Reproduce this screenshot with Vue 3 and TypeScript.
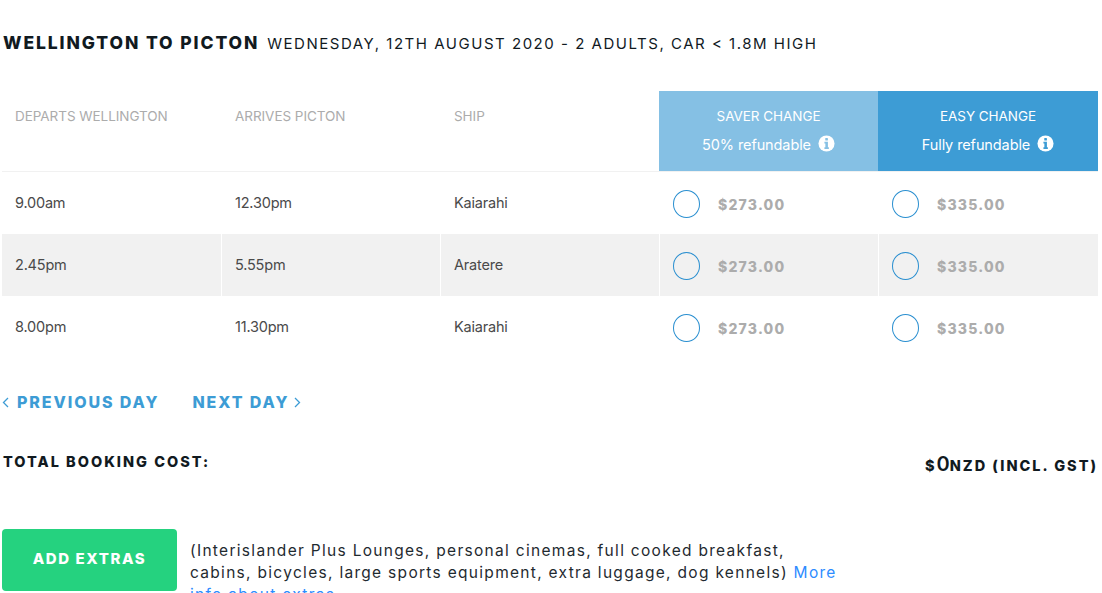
<script setup lang="ts">
interface Sailing {
  departs: string;
  arrives: string;
  ship: string;
}

const sailings: Sailing[] = [
  { departs: "9.00am", arrives: "12.30pm", ship: "Kaiarahi" },
  { departs: "2.45pm", arrives: "5.55pm", ship: "Aratere" },
  { departs: "8.00pm", arrives: "11.30pm", ship: "Kaiarahi" },
];
</script>

<template>
  <div class="page">
    <h1 class="title">
      <strong>WELLINGTON TO PICTON</strong>
      <span>WEDNESDAY, 12TH AUGUST 2020 - 2 ADULTS, CAR &lt; 1.8M HIGH</span>
    </h1>

    <div class="table">
      <div class="row head">
        <div class="cell">DEPARTS WELLINGTON</div>
        <div class="cell">ARRIVES PICTON</div>
        <div class="cell">SHIP</div>
        <div class="fare saver">
          <div>SAVER CHANGE</div>
          <div class="refund">
            50% refundable
            <svg class="info" viewBox="0 0 18 18">
              <circle cx="9" cy="9" r="8.5" fill="#fff" />
              <rect x="7.7" y="3.2" width="2.8" height="2.6" rx="0.6" fill="#85c0e4" />
              <path d="M6.8 7.2h3.7v5.7h1v1.8H6.8v-1.8h1v-3.900h-1z" fill="#85c0e4" />
            </svg>
          </div>
        </div>
        <div class="fare easy">
          <div>EASY CHANGE</div>
          <div class="refund">
            Fully refundable
            <svg class="info" viewBox="0 0 18 18">
              <circle cx="9" cy="9" r="8.5" fill="#fff" />
              <rect x="7.7" y="3.2" width="2.8" height="2.6" rx="0.6" fill="#3d9cd5" />
              <path d="M6.8 7.2h3.700v5.7h1v1.8H6.800v-1.8h1v-3.900h-1z" fill="#3d9cd5" />
            </svg>
          </div>
        </div>
      </div>

      <div v-for="s in sailings" :key="s.departs" class="row body">
        <div class="cell">{{ s.departs }}</div>
        <div class="cell">{{ s.arrives }}</div>
        <div class="cell">{{ s.ship }}</div>
        <div class="cell price">
          <span class="radio"></span>
          <span class="amount">$273.00</span>
        </div>
        <div class="cell price">
          <span class="radio"></span>
          <span class="amount">$335.00</span>
        </div>
      </div>
    </div>

    <div class="days">
      <a class="day">
        <svg class="chev" viewBox="0 0 7 11"><path d="M6 1 1.500 5.500 6 10" /></svg>
        PREVIOUS DAY
      </a>
      <a class="day next">
        NEXT DAY
        <svg class="chev" viewBox="0 0 7 11"><path d="M1 1 5.500 5.500 1 10" /></svg>
      </a>
    </div>

    <div class="total">
      <div class="total-label">TOTAL BOOKING COST:</div>
      <div class="total-value">$<span class="zero">0</span>NZD (INCL. GST)</div>
    </div>

    <div class="extras">
      <button class="add" type="button">ADD EXTRAS</button>
      <p class="extras-text">
        (Interislander Plus Lounges, personal cinemas, full cooked breakfast,
        cabins, bicycles, large sports equipment, extra luggage, dog kennels)
        <a class="more">More info about extras</a>
      </p>
    </div>
  </div>
</template>

<style>
html,
body {
  margin: 0;
  height: 593px;
  overflow: hidden;
  background: #fff;
}
</style>

<style scoped>
.page {
  width: 1096px;
  margin-left: 2px;
  font-family: Inter, "Open Sans", sans-serif;
  color: #111a1f;
}

.title {
  margin: 0;
  padding-top: 34px;
  height: 91px;
  box-sizing: border-box;
  font-size: 15px;
  line-height: 18px;
  font-weight: 400;
  letter-spacing: 1.52px;
  white-space: nowrap;
}

.title strong {
  font-size: 17.5px;
  font-weight: 800;
  letter-spacing: 1.9px;
  margin-left: 1px;
  margin-right: 8px;
}

.table {
  display: flex;
  flex-direction: column;
}

.row {
  display: grid;
  grid-template-columns: 220px 219px 218px 219px 220px;
}

.head {
  height: 81px;
  font-size: 13.5px;
  letter-spacing: -0.05px;
  color: #acacac;
  box-shadow: inset 0 -1px 0 #f1f1f1;
}

.head .cell {
  padding: 17px 0 0 13px;
  line-height: 16px;
}

.fare {
  height: 80px;
  box-sizing: border-box;
  padding-top: 17px;
  text-align: center;
  color: #fff;
  line-height: 17px;
}

.saver {
  background: #85c0e4;
}

.easy {
  background: #3d9cd5;
}

.refund {
  margin-top: 11px;
  font-size: 14.5px;
  letter-spacing: -0.1px;
  display: flex;
  justify-content: center;
  align-items: center;
  gap: 7px;
}

.info {
  width: 17px;
  height: 17px;
  margin-top: -3px;
}

.body {
  height: 62px;
  font-size: 14.5px;
  letter-spacing: -0.2px;
  color: #4a4a4a;
}

.body .cell {
  display: flex;
  align-items: center;
  padding-left: 13px;
  padding-bottom: 2px;
  box-sizing: border-box;
}

.body:nth-child(3) .cell {
  background: #f1f1f1;
  box-shadow: inset -1px 0 0 #fff;
}

.body:nth-child(3) .cell:nth-child(3) {
  box-shadow: none;
}

.body:nth-child(3) .price {
  box-shadow: inset 1px 0 0 #fff;
}

.body .price {
  padding-left: 14px;
  padding-top: 1px;
  padding-bottom: 0;
}

.radio {
  width: 25px;
  height: 26px;
  border: 1px solid #2a8fd0;
  border-radius: 50%;
  background: transparent;
  flex: none;
}

.amount {
  margin-left: 18px;
  margin-top: 2px;
  font-size: 14px;
  font-weight: 800;
  letter-spacing: 1.2px;
  color: #acacac;
}

.days {
  display: flex;
  gap: 33px;
  margin-top: 34px;
  height: 20px;
}

.day {
  display: flex;
  align-items: center;
  gap: 8px;
  font-size: 16px;
  font-weight: 800;
  letter-spacing: 1.9px;
  line-height: 20px;
  color: #3d9cd5;
}

.next {
  gap: 5px;
}

.chev {
  width: 7px;
  height: 11px;
  fill: none;
  stroke: #3d9cd5;
  stroke-width: 1.3;
}

.total {
  display: flex;
  justify-content: space-between;
  margin-top: 40px;
  height: 20px;
  padding-left: 1px;
  font-size: 14.5px;
  font-weight: 800;
  letter-spacing: 2px;
  line-height: 20px;
}

.total-value {
  margin-top: 2px;
}

.zero {
  font-size: 20px;
  font-weight: 600;
  letter-spacing: 0;
}

.extras {
  display: flex;
  gap: 13px;
  margin-top: 57px;
}

.add {
  width: 175px;
  height: 62px;
  flex: none;
  border: 0;
  border-radius: 4px;
  padding: 0 0 4px;
  background: #25d27f;
  color: #fff;
  font-family: inherit;
  font-size: 15px;
  font-weight: 800;
  letter-spacing: 1.6px;
}

.extras-text {
  margin: 11px 0 0;
  width: 652px;
  font-size: 15.5px;
  line-height: 22px;
  letter-spacing: 1.3px;
  color: #1f2a30;
}

.more {
  color: #2d8cff;
}
</style>
